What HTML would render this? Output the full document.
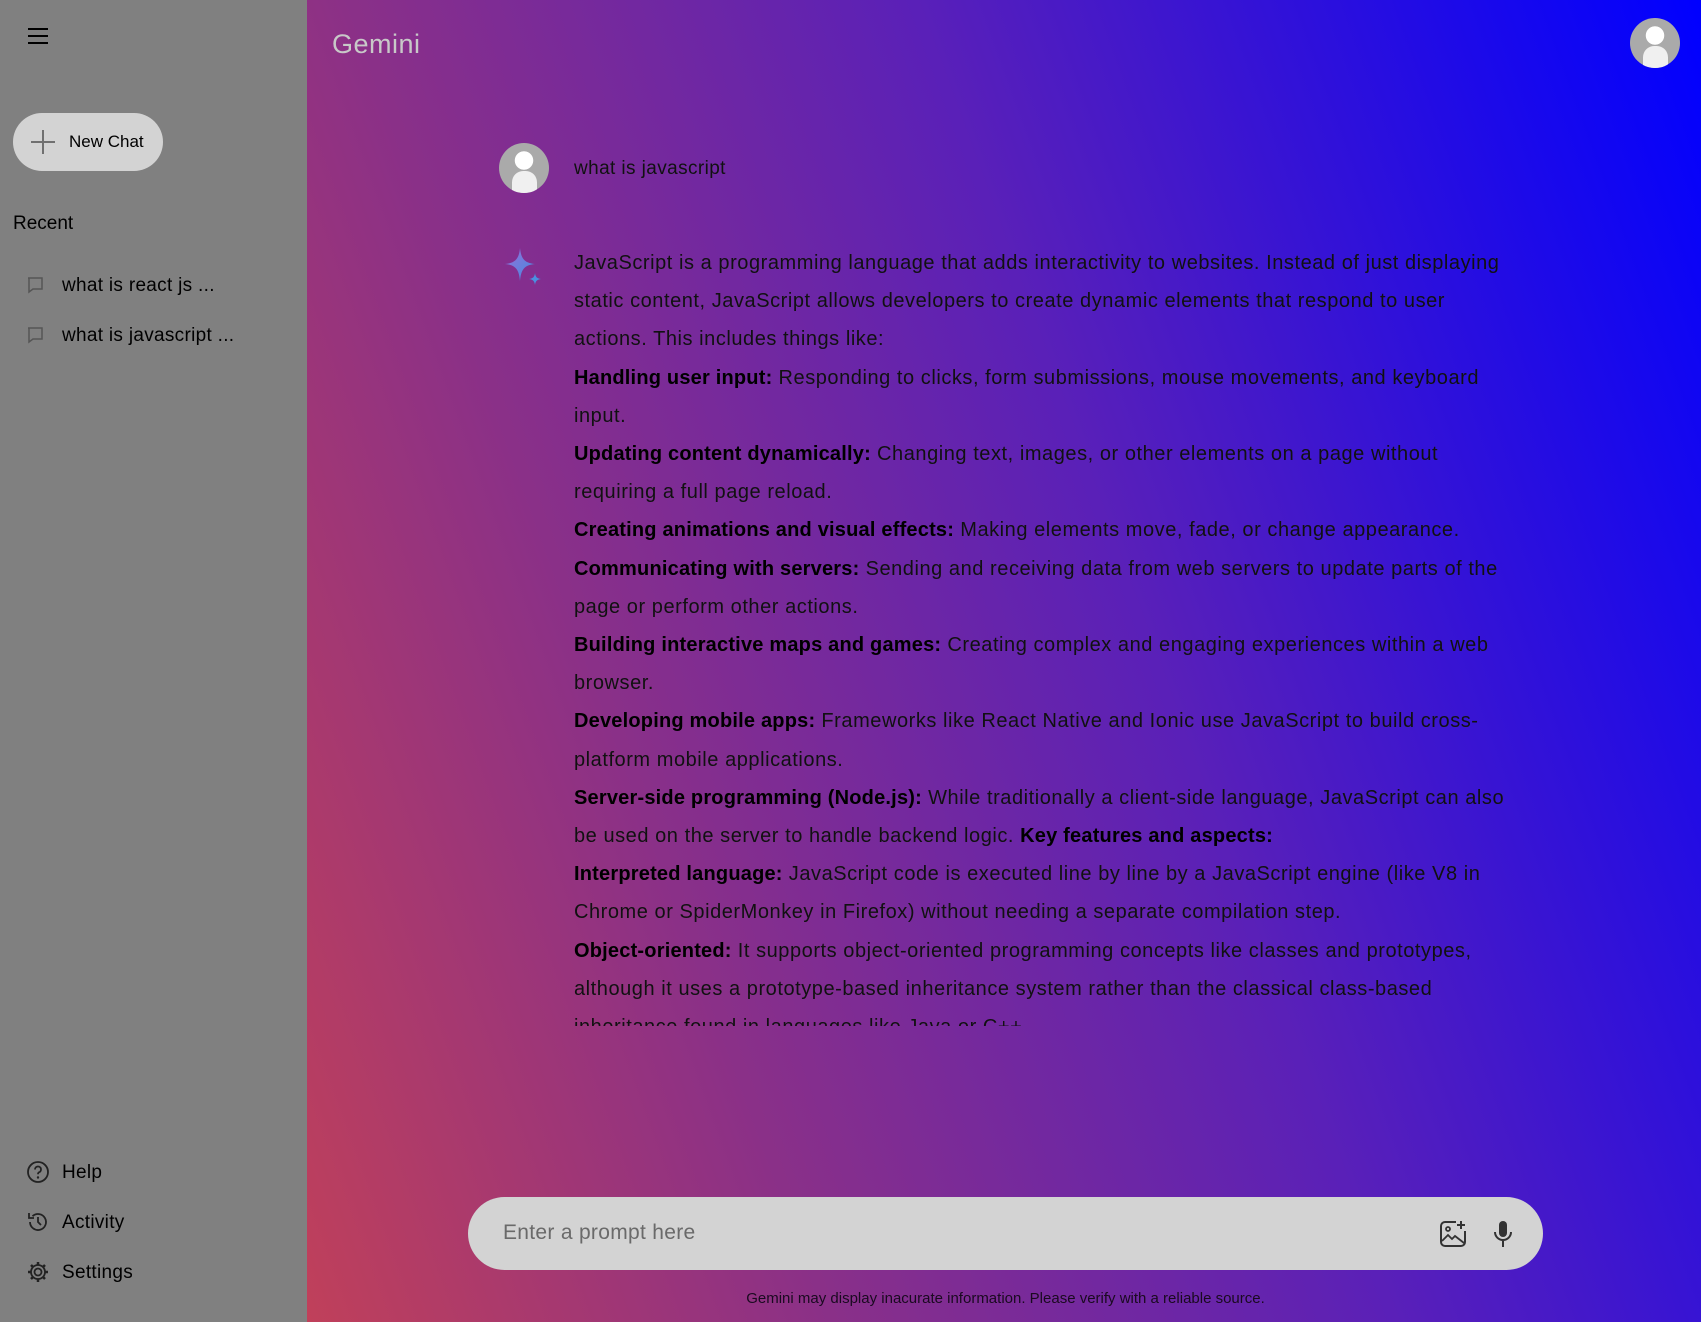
<!DOCTYPE html>
<html><head><style>
*{margin:0;padding:0;box-sizing:border-box}
body{width:1701px;height:1322px;overflow:hidden;font-family:"Liberation Sans",sans-serif;position:relative}
#side{position:absolute;left:0;top:0;width:307px;height:1322px;background:#808080;color:#000}
#main{position:absolute;left:307px;top:0;right:0;height:1322px;background:linear-gradient(70deg,#c0405a 0%,#8a3088 28%,#5a20b8 58%,#0000ff 100%)}
.abs{position:absolute}
.newchat{left:13px;top:113px;width:150px;height:58px;border-radius:29px;background:#d3d3d3;font-size:17px}
.item{left:62px;font-size:19px;letter-spacing:0.3px}
.msg{position:absolute;left:0;width:935px;font-size:20px;line-height:38.2px;color:#111;letter-spacing:0.55px}
.msg b{color:#000;letter-spacing:0.2px}
.av{position:absolute;border-radius:50%;background:radial-gradient(circle at 50% 35%,#fff 0 22%,#aaa 23% 100%);overflow:hidden}
.av::after{content:"";position:absolute;left:25%;top:55%;width:50%;height:50%;border-radius:45% 45% 0 0;background:#f0f0f0}
</style></head><body>
<div id="side">
  <svg class="abs" style="left:27px;top:27px" width="22" height="18"><path d="M1 2h20M1 9h20M1 16h20" stroke="#000" stroke-width="2"/></svg>
  <div class="abs newchat">
    <svg class="abs" style="left:17px;top:16px" width="26" height="26"><path d="M13 1v24M1 13h24" stroke="#707070" stroke-width="2"/></svg>
    <span class="abs" style="left:56px;top:19px">New Chat</span>
  </div>
  <div class="abs" style="left:13px;top:213px;font-size:19px">Recent</div>
  <svg class="abs" style="left:26px;top:276px" width="18" height="18"><path d="M2 2h14v11H7l-4 3V2z" fill="none" stroke="#555" stroke-width="1.5"/></svg>
  <div class="abs item" style="top:275px">what is react js ...</div>
  <svg class="abs" style="left:26px;top:326px" width="18" height="18"><path d="M2 2h14v11H7l-4 3V2z" fill="none" stroke="#555" stroke-width="1.5"/></svg>
  <div class="abs item" style="top:325px">what is javascript ...</div>
  <svg class="abs" style="left:26px;top:1160px" width="24" height="24"><circle cx="12" cy="12" r="10" fill="none" stroke="#222" stroke-width="1.8"/><path d="M9 9.5a3 3 0 1 1 4 2.8c-.8.4-1 1-1 2" fill="none" stroke="#222" stroke-width="1.8"/><circle cx="12" cy="17.5" r="1.2" fill="#222"/></svg>
  <div class="abs item" style="top:1162px">Help</div>
  <svg class="abs" style="left:26px;top:1210px" width="24" height="24"><path d="M4 12a8 8 0 1 0 2.5-5.8" fill="none" stroke="#222" stroke-width="1.8"/><path d="M3 3v5h5" fill="none" stroke="#222" stroke-width="1.8"/><path d="M12 7v5l3 3" fill="none" stroke="#222" stroke-width="1.8"/></svg>
  <div class="abs item" style="top:1212px">Activity</div>
  <svg class="abs" style="left:26px;top:1260px" width="24" height="24"><circle cx="12" cy="12" r="3.5" fill="none" stroke="#222" stroke-width="1.8"/><path d="M12 2v3M12 19v3M2 12h3M19 12h3M5 5l2 2M17 17l2 2M5 19l2-2M17 7l2-2" stroke="#222" stroke-width="2.5"/><circle cx="12" cy="12" r="7" fill="none" stroke="#222" stroke-width="1.8"/></svg>
  <div class="abs item" style="top:1262px">Settings</div>
</div>
<div id="main"></div>
<div class="abs" style="left:332px;top:29px;font-size:27px;color:#c8c8c8;letter-spacing:0.5px">Gemini</div>
<div class="av" style="left:1630px;top:18px;width:50px;height:50px"></div>
<div class="av" style="left:499px;top:143px;width:50px;height:50px"></div>
<div class="abs" style="left:574px;top:158px;font-size:19px;color:#111;letter-spacing:0.4px">what is javascript</div>
<svg class="abs" style="left:502px;top:247px" width="42" height="42"><defs><linearGradient id="g" x1="0" y1="0" x2="1" y2="1"><stop offset="0" stop-color="#9a6cd8"/><stop offset="1" stop-color="#3f8ee0"/></linearGradient></defs><path d="M18 1C19 11 22 16 33 17C22 18 19 23 18 34C17 23 14 18 3 17C14 16 17 11 18 1Z" fill="url(#g)"/><path d="M33 26C33.5 30 35 31.5 39 32C35 32.5 33.5 34 33 38C32.5 34 31 32.5 27 32C31 31.5 32.5 30 33 26Z" fill="#4a90e0"/></svg>
<div style="position:absolute;left:574px;top:244px;width:945px;height:782px;overflow:hidden">
<div class="msg" style="top:0">JavaScript is a programming language that adds interactivity to websites. Instead of just displaying static content, JavaScript allows developers to create dynamic elements that respond to user actions. This includes things like:<br>
<b>Handling user input:</b> Responding to clicks, form submissions, mouse movements, and keyboard input.<br>
<b>Updating content dynamically:</b> Changing text, images, or other elements on a page without requiring a full page reload.<br>
<b>Creating animations and visual effects:</b> Making elements move, fade, or change appearance.<br>
<b>Communicating with servers:</b> Sending and receiving data from web servers to update parts of the page or perform other actions.<br>
<b>Building interactive maps and games:</b> Creating complex and engaging experiences within a web browser.<br>
<b>Developing mobile apps:</b> Frameworks like React Native and Ionic use JavaScript to build cross-platform mobile applications.<br>
<b>Server-side programming (Node.js):</b> While traditionally a client-side language, JavaScript can also be used on the server to handle backend logic. <b>Key features and aspects:</b><br>
<b>Interpreted language:</b> JavaScript code is executed line by line by a JavaScript engine (like V8 in Chrome or SpiderMonkey in Firefox) without needing a separate compilation step.<br>
<b>Object-oriented:</b> It supports object-oriented programming concepts like classes and prototypes, although it uses a prototype-based inheritance system rather than the classical class-based inheritance found in languages like Java or C++.</div>
</div>
<div class="abs" style="left:468px;top:1197px;width:1075px;height:73px;border-radius:37px;background:#d3d3d3">
  <span class="abs" style="left:35px;top:24px;font-size:21px;color:#6a6a6a;letter-spacing:0.3px">Enter a prompt here</span>
  <svg class="abs" style="left:970px;top:22px" width="30" height="30"><path d="M18 3H7a4 4 0 0 0-4 4v16a4 4 0 0 0 4 4h16a4 4 0 0 0 4-4V12" fill="none" stroke="#333" stroke-width="2"/><path d="M23 2v8M19 6h8" stroke="#333" stroke-width="2"/><circle cx="10" cy="10" r="2" fill="none" stroke="#333" stroke-width="1.8"/><path d="M4 22l6-6 4 4 3-3 9 7" fill="none" stroke="#333" stroke-width="1.8"/></svg>
  <svg class="abs" style="left:1025px;top:22px" width="20" height="30"><rect x="6" y="2" width="8" height="16" rx="4" fill="#333"/><path d="M2 13a8 8 0 0 0 16 0M10 21v7" fill="none" stroke="#333" stroke-width="2"/></svg>
</div>
<div class="abs" style="left:468px;top:1290px;width:1075px;text-align:center;font-size:15px;color:#1a0a20">Gemini may display inacurate information. Please verify with a reliable source.</div>
</body></html>
